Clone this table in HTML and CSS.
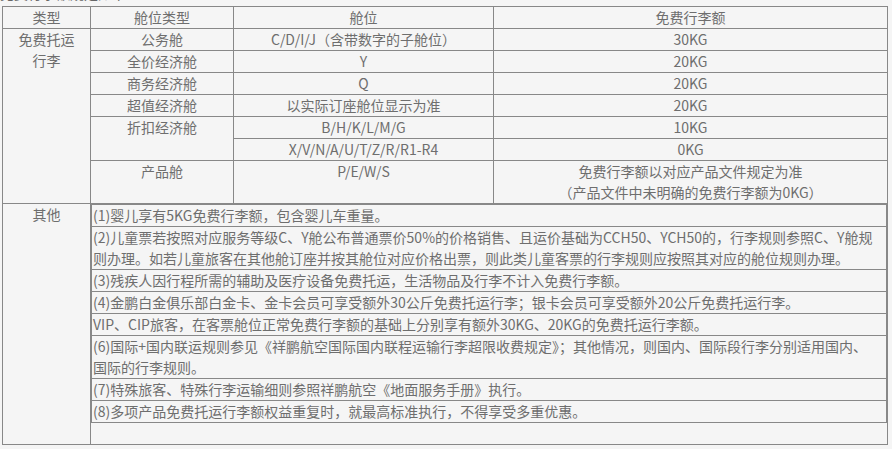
FILE: index.html
```html
<!DOCTYPE html>
<html lang="zh-CN">
<head>
<meta charset="utf-8">
<link rel="stylesheet" href="styles.css">
</head>
<body>
<div class="title">免费行李额规定如下：</div>
<table class="bag">
  <colgroup>
    <col class="c1"><col class="c2"><col class="c3"><col class="c4">
  </colgroup>
  <tr><td>类型</td><td>舱位类型</td><td>舱位</td><td>免费行李额</td></tr>
  <tr><td rowspan="7" class="type">免费托运行李</td><td>公务舱</td><td>C/D/I/J（含带数字的子舱位）</td><td>30KG</td></tr>
  <tr><td>全价经济舱</td><td>Y</td><td>20KG</td></tr>
  <tr><td>商务经济舱</td><td>Q</td><td>20KG</td></tr>
  <tr><td>超值经济舱</td><td>以实际订座舱位显示为准</td><td>20KG</td></tr>
  <tr><td rowspan="2">折扣经济舱</td><td>B/H/K/L/M/G</td><td>10KG</td></tr>
  <tr><td>X/V/N/A/U/T/Z/R/R1-R4</td><td>0KG</td></tr>
  <tr><td>产品舱</td><td>P/E/W/S</td><td>免费行李额以对应产品文件规定为准<br>（产品文件中未明确的免费行李额为0KG）</td></tr>
  <tr>
    <td>其他</td>
    <td colspan="3" class="nest">
      <table class="inner">
        <tr><td>(1)婴儿享有5KG免费行李额，包含婴儿车重量。</td></tr>
        <tr><td>(2)儿童票若按照对应服务等级C、Y舱公布普通票价50%的价格销售、且运价基础为CCH50、YCH50的，行李规则参照C、Y舱规则办理。如若儿童旅客在其他舱订座并按其舱位对应价格出票，则此类儿童客票的行李规则应按照其对应的舱位规则办理。</td></tr>
        <tr><td>(3)残疾人因行程所需的辅助及医疗设备免费托运，生活物品及行李不计入免费行李额。</td></tr>
        <tr><td>(4)金鹏白金俱乐部白金卡、金卡会员可享受额外30公斤免费托运行李；银卡会员可享受额外20公斤免费托运行李。</td></tr>
        <tr><td>VIP、CIP旅客，在客票舱位正常免费行李额的基础上分别享有额外30KG、20KG的免费托运行李额。</td></tr>
        <tr><td>(6)国际+国内联运规则参见《祥鹏航空国际国内联程运输行李超限收费规定》；其他情况，则国内、国际段行李分别适用国内、<br>国际的行李规则。</td></tr>
        <tr><td>(7)特殊旅客、特殊行李运输细则参照祥鹏航空《地面服务手册》执行。</td></tr>
        <tr><td>(8)多项产品免费托运行李额权益重复时，就最高标准执行，不得享受多重优惠。</td></tr>
      </table>
      <div class="blank"></div>
    </td>
  </tr>
</table>
</body>
</html>
```

FILE: styles.css
```css
html, body {
  margin: 0;
  padding: 0;
  background: #f5f5f5;
}
body {
  font-family: "Microsoft YaHei", "Noto Sans CJK SC", sans-serif;
  font-size: 14px;
  line-height: 21px;
  color: #6e6e6e;
}
.title {
  height: 23px;
  margin-top: -17px;
  color: #666;
}
.bag {
  margin-left: 2px;
  width: 885px;
  border-collapse: collapse;
  table-layout: fixed;
}
.c1 { width: 88px; }
.c2 { width: 143px; }
.c3 { width: 260px; }
.c4 { width: 394px; }
.bag td {
  border: 1px solid #888;
  padding: 0;
  text-align: center;
  vertical-align: top;
}
.bag td.type {
  padding: 0 10px;
}
.bag td.nest {
  text-align: left;
}
.inner {
  width: 100%;
  border-collapse: collapse;
  border: 1px solid #888;
}
.inner td {
  text-align: left;
  padding: 0 0 0 1px;
}
.blank {
  height: 21px;
}
```
